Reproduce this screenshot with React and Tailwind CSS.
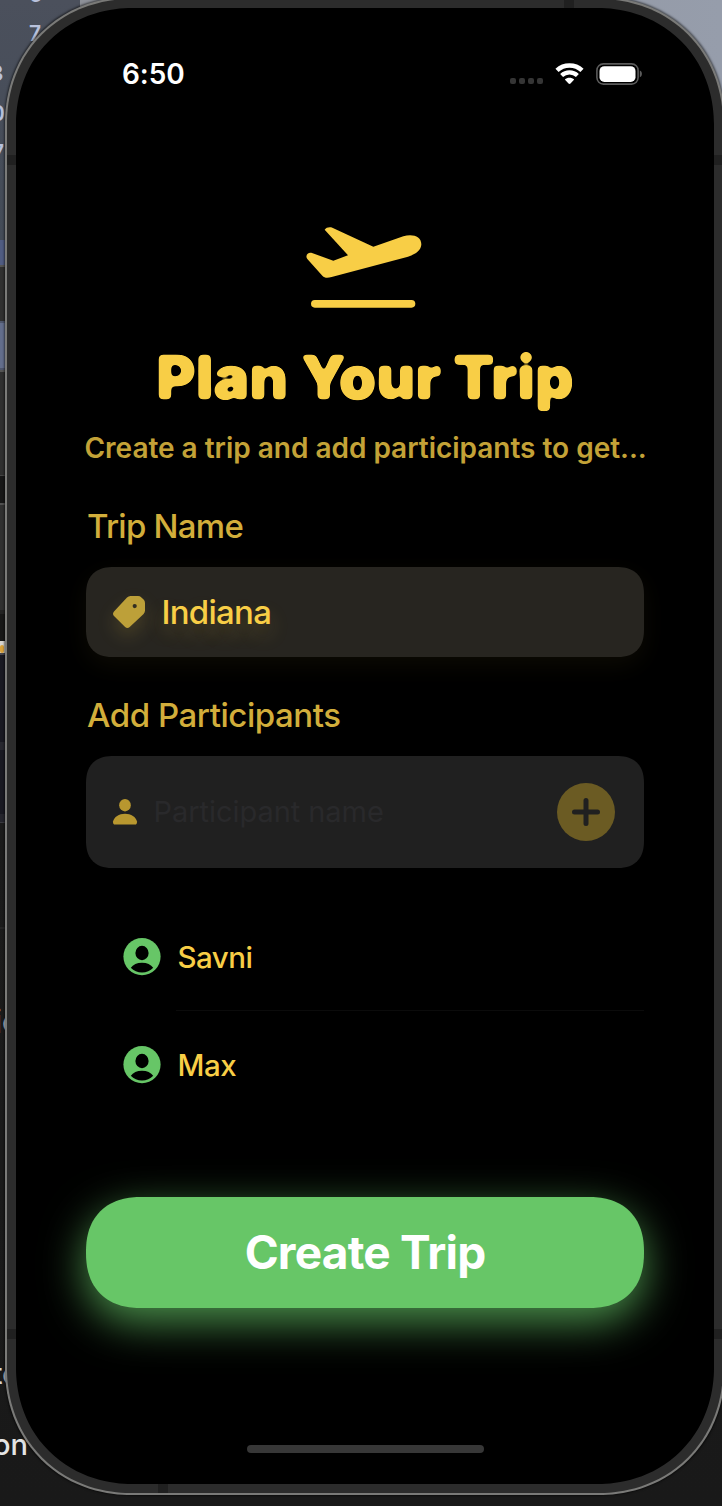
import React from "react";

function Desktop() {
  return (
    <div className="absolute inset-0 flex flex-col overflow-hidden bg-[#1a1a1a] text-[#c9cdd6]">
      <div className="flex h-[240px] shrink-0">
        <div className="relative h-full w-20 bg-linear-to-b from-[#4b505c] to-[#434b57] text-[21px] font-semibold text-[#b9c2dc]">
          <span className="absolute top-[-21px] left-[29px]">6</span>
          <span className="absolute top-[18px] left-[29px]">7</span>
          <span className="absolute top-[58px] left-[-10px]">3</span>
          <span className="absolute top-[98px] left-[-9px]">0</span>
          <span className="absolute top-[137px] left-[-8px]">7</span>
        </div>
        <div className="h-full grow bg-linear-to-r from-[#8d9098] to-[#969dab]" />
      </div>
      <div className="h-[25px] shrink-0 bg-[#505c82]" />
      <div className="h-[56px] shrink-0 border-t-2 border-[#555] bg-[#303030]" />
      <div className="h-[49px] shrink-0 border-y-2 border-[#4e566c] bg-[#636e8c]" />
      <div className="h-[105px] shrink-0 border-t-2 border-[#555] bg-[#2f2f2f]" />
      <div className="h-[28px] shrink-0 border-t border-[#444] bg-[#171717]" />
      <div className="h-[107px] shrink-0 border-t-2 border-[#505050] bg-[#303030]" />
      <div className="h-[31px] shrink-0 border-t-4 border-[#232323] bg-[#171717]" />
      <div className="flex h-[12px] shrink-0 items-end bg-[#d8d5cf]">
        <div className="h-2 w-1 rounded-full bg-[#d9a23c]" />
      </div>
      <div className="h-[89px] shrink-0 border-t-2 border-[#44444c] bg-[#191922]" />
      <div className="h-[8px] shrink-0 bg-[#27272f]" />
      <div className="h-[64px] shrink-0 bg-[#191922]" />
      <div className="h-[9px] shrink-0 border-b border-[#3a3a40] bg-[#25252d]" />
      <div className="relative grow bg-linear-to-b from-[#1b1b1b] to-[#191919] text-[28px] font-medium text-[#d5d5d5]">
        <div className="h-[106px] border-b-2 border-[#252525]" />
        <span className="absolute top-[175px] left-[-6px] text-[32px]">ic</span>
        <span className="absolute top-[530px] left-[-7px]">te</span>
        <span className="absolute top-[601px] left-[-7px] text-[29px] leading-[42px] font-[550] tracking-[0px] text-[#e4e4e4]">on</span>
      </div>
    </div>
  );
}

function StatusBar() {
  return (
    <header className="mt-[51px] flex h-[30px] items-center pr-[71px] pl-[106px]">
      <span className="text-[28px] font-semibold tracking-[-0.1px] text-white">6:50</span>
      <div className="ml-auto flex items-center">
        <div className="mt-[14px] flex gap-[3px]">
          <i className="size-[6px] rounded-[2px] bg-[#353535]" />
          <i className="size-[6px] rounded-[2px] bg-[#353535]" />
          <i className="size-[6px] rounded-[2px] bg-[#353535]" />
          <i className="size-[6px] rounded-[2px] bg-[#353535]" />
        </div>
        <svg className="ml-[12px]" width="29" height="22" viewBox="0 0 29 22" fill="none">
          <path d="M2 7.400C9 .9 20 .9 27 7.400" stroke="#fff" strokeWidth="4.600" />
          <path d="M6.600 12.500c4.400-4.200 11.400-4.200 15.800 0" stroke="#fff" strokeWidth="4.200" />
          <path d="M9.800 16.600c2.500-2.500 6.900-2.500 9.400 0l-3.700 3.900q-1 .9-2 0z" fill="#fff" />
        </svg>
        <svg className="ml-[12px]" width="47" height="22" viewBox="0 0 47 22">
          <rect x=".9" y=".9" width="41.2" height="20.2" rx="6.5" fill="none" stroke="#5b5b5b" strokeWidth="1.6" />
          <rect x="3.5" y="3.2" width="36" height="15.8" rx="4.8" fill="#fff" />
          <path d="M43.8 7.500c2.800 1 2.800 5.800 0 6.800z" fill="#5b5b5b" />
        </svg>
      </div>
    </header>
  );
}

function Departure() {
  return (
    <svg className="mt-[121px] self-center" width="170" height="110" viewBox="0 0 510 330" fill="#f8ce46">
      <path d="M134 59C138 52 149 50 157 53L280 110L370 79C398 71 424 79 424 103C424 123 402 135 384 140L155 201C141 205 134 204 127 197L82 147C75 138 82 126 96 129L160 152L204 136Z" />
      <rect x="93" y="270" width="313" height="23" rx="11.5" />
    </svg>
  );
}

function Participant({ name }) {
  return (
    <li className="flex h-[108px] items-center pl-[37px]">
      <svg width="38" height="38" viewBox="0 0 38 38">
        <circle cx="19" cy="18.600" r="18.600" fill="#67c667" />
        <ellipse cx="19" cy="15" rx="6.600" ry="7.200" fill="#000" />
        <path d="M7.800 29.700C10 26.600 14 24.700 19 24.700s9 1.900 11.200 5c-2.800 3-6.800 4.800-11.200 4.800S10.600 32.700 7.800 29.700z" fill="#000" />
      </svg>
      <span className="ml-[16.5px] text-[29.5px] font-medium tracking-[-0.5px] text-[#f8ce46]">{name}</span>
    </li>
  );
}

function Screen() {
  return (
    <main className="flex h-[1476px] w-[698px] flex-col overflow-hidden rounded-[116px] bg-black [corner-shape:superellipse(1.05)]">
      <StatusBar />
      <Departure />
      <div className="flex flex-col px-[70px]">
        <h1 className="mt-[21px] h-[72px] self-center text-[60px] leading-[72px] font-black tracking-[0.05px] whitespace-nowrap text-[#f8ce46] [filter:url(#soften)]">
          Plan Your Trip
        </h1>
        <p className="mt-[15px] -ml-[1.5px] h-10 text-[28px] leading-10 font-[560] tracking-[-0.02px] whitespace-nowrap text-[#c3a237]">
          Create a trip and add participants to get...
        </p>
        <label className="mt-[38px] ml-px h-10 text-[33px] leading-10 font-[550] tracking-[-0.75px] whitespace-nowrap text-[#d2ae3b]">Trip Name</label>
        <div className="mt-[21px] flex h-[90px] items-center rounded-[28px] bg-[#272520] pl-[26px] shadow-[0_8px_24px_rgba(248,206,70,0.05)] [corner-shape:superellipse(1.3)]">
          <svg className="drop-shadow-[0_9px_9px_rgba(248,206,70,0.15)]" width="34" height="34" viewBox="0 0 34 34">
            <path
              fillRule="evenodd"
              fill="#bda039"
              d="M18.500 1H26q2 0 3.400 1.400l2.200 2.200Q33 6 33 8v7.500q0 2-1.400 3.400L17.700 32q-2.300 2-4.600 0L2 21Q0 18.700 2 16.400L15 2.600Q16.500 1 18.500 1zM22.700 9a2.100 2.100 0 1 0 0 4.200 2.100 2.100 0 0 0 0-4.200z"
            />
          </svg>
          <span className="mt-[2px] ml-[15.5px] text-[33px] font-medium tracking-[-0.75px] text-[#f8ce46] [text-shadow:0_10px_20px_rgba(248,206,70,0.22)]">Indiana</span>
        </div>
        <label className="mt-[38px] ml-px h-10 text-[33px] leading-10 font-[550] tracking-[-0.45px] whitespace-nowrap text-[#d2ae3b]">Add Participants</label>
        <div className="mt-[21px] flex h-[112px] items-center rounded-[28px] bg-[#202020] pr-[29px] pl-[26px] [corner-shape:superellipse(1.3)]">
          <svg width="26" height="26" viewBox="0 0 26 26" fill="#b8972f">
            <ellipse cx="13" cy="6.200" rx="5.800" ry="6.200" />
            <path d="M1 22.500C2 18 7 14.700 13 14.700S24 18 25 22.500Q25.200 25.600 23 25.600H3Q.8 25.600 1 22.500z" />
          </svg>
          <span className="ml-[15.5px] text-[29px] tracking-[-0.05px] text-[#29292b]">Participant name</span>
          <div className="ml-auto flex size-[58px] items-center justify-center rounded-full bg-[#6b5b23]">
            <svg width="28" height="28" viewBox="0 0 28 28" stroke="#202020" strokeWidth="5" strokeLinecap="round">
              <path d="M14 2.500v23M2.500 14h23" />
            </svg>
          </div>
        </div>
        <ul className="mt-[34px] flex flex-col pt-px">
          <Participant name="Savni" />
          <li className="-mt-px ml-[90px] h-px bg-[#0b0b0b]" />
          <Participant name="Max" />
        </ul>
        <button className="mt-[78px] h-[111px] rounded-[55px] bg-[#67c667] text-[46px] font-bold tracking-[-0.8px] whitespace-nowrap text-white shadow-[0_14px_44px_rgba(103,198,104,0.74)] [corner-shape:superellipse(1.2)]">
          Create Trip
        </button>
      </div>
      <div className="mt-auto mb-[31px] h-[8px] w-[237px] self-center rounded-full bg-[#373737]" />
    </main>
  );
}

export default function App() {
  return (
    <div className="relative h-[1506px] w-[722px] overflow-hidden bg-[#1b1b1b] font-['Inter',sans-serif]">
      <svg className="absolute size-0">
        <filter id="soften" x="-5%" y="-10%" width="110%" height="120%" colorInterpolationFilters="sRGB">
          <feGaussianBlur stdDeviation="2.300" />
          <feComponentTransfer>
            <feFuncR type="linear" slope="0" intercept="0.973" />
            <feFuncG type="linear" slope="0" intercept="0.808" />
            <feFuncB type="linear" slope="0" intercept="0.275" />
            <feFuncA type="linear" slope="7" intercept="-2.600" />
          </feComponentTransfer>
        </filter>
      </svg>
      <Desktop />
      <div className="absolute -top-[3px] left-[5px] h-[1498px] w-[720px] rounded-[126px] border-2 border-[#7a7a78] bg-[#2c2c2c] pt-[9px] pl-[9px] shadow-[0_0_2px_1px_rgba(0,0,0,0.5)] [corner-shape:superellipse(1.05)]">
        <i className="absolute top-[156px] left-0 h-[10px] w-[9px] bg-[#202020]" />
        <i className="absolute top-[156px] right-0 h-[10px] w-[9px] bg-[#202020]" />
        <i className="absolute top-[1330px] left-0 h-[10px] w-[9px] bg-[#202020]" />
        <i className="absolute top-[1330px] right-0 h-[10px] w-[9px] bg-[#202020]" />
        <i className="absolute top-0 left-[557px] h-[9px] w-[10px] bg-[#202020]" />
        <i className="absolute bottom-0 left-[151px] h-[9px] w-[10px] bg-[#202020]" />
        <Screen />
      </div>
    </div>
  );
}
